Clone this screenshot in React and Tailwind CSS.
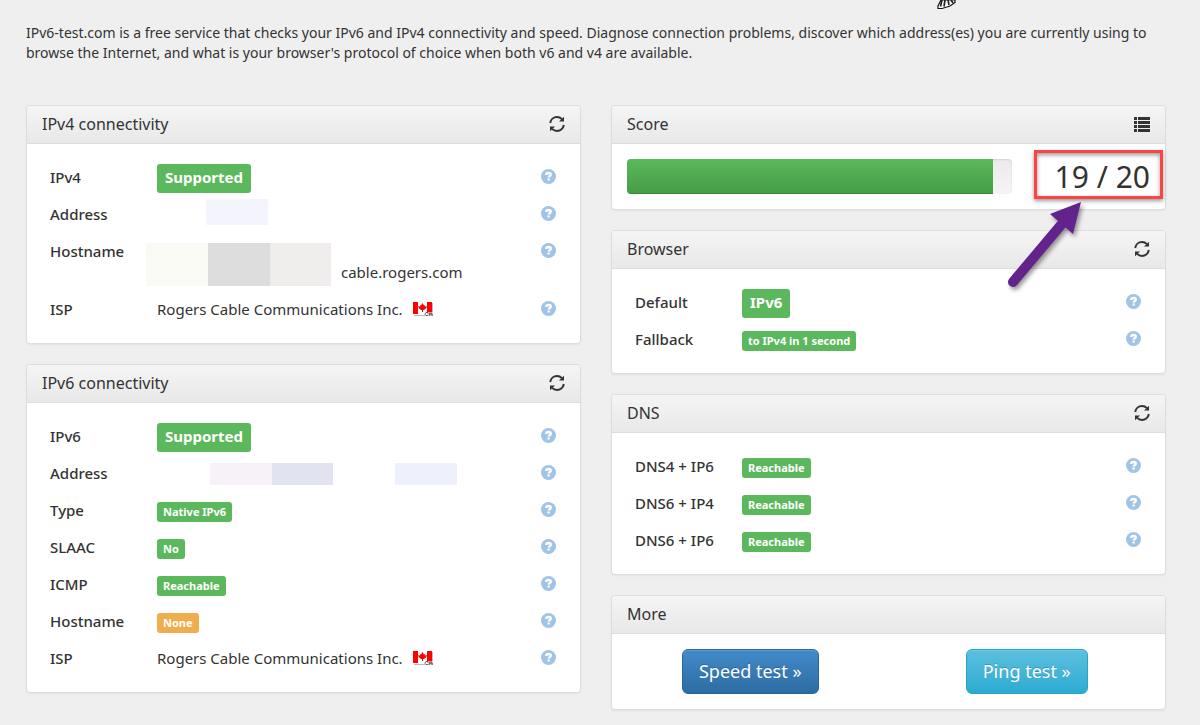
import React from 'react';

const ipv4Rows = [
  { label: 'IPv4', badge: 'Supported', large: true },
  { label: 'Address', blocks: 'v4address' },
  { label: 'Hostname', blocks: 'v4host' },
  { label: 'ISP', isp: 'Rogers Cable Communications Inc.' },
];

const ipv6Rows = [
  { label: 'IPv6', badge: 'Supported', large: true },
  { label: 'Address', blocks: 'v6address' },
  { label: 'Type', badge: 'Native IPv6' },
  { label: 'SLAAC', badge: 'No' },
  { label: 'ICMP', badge: 'Reachable' },
  { label: 'Hostname', badge: 'None', warning: true },
  { label: 'ISP', isp: 'Rogers Cable Communications Inc.' },
];

const browserRows = [
  { label: 'Default', badge: 'IPv6', large: true },
  { label: 'Fallback', badge: 'to IPv4 in 1 second' },
];

const dnsRows = [
  { label: 'DNS4 + IP6', badge: 'Reachable' },
  { label: 'DNS6 + IP4', badge: 'Reachable' },
  { label: 'DNS6 + IP6', badge: 'Reachable' },
];

const RefreshIcon = () => (
  <svg className="w-4 h-4" viewBox="0 0 16 16" fill="none">
    <path d="M1.200 7C1.700 3.600 4.600 1.100 8 1.100c2 0 3.600.700 4.900 2" stroke="#333" strokeWidth="2" />
    <path d="M14.800 9C14.300 12.400 11.400 14.900 8 14.900c-2 0-3.600-.700-4.900-2" stroke="#333" strokeWidth="2" />
    <path d="M15 .8V5.500H10zM1 15.200V10.500h5z" fill="#333" />
  </svg>
);

const ListIcon = () => (
  <svg className="w-4 h-4" viewBox="0 0 16 16" fill="#333">
    <path d="M0 1h3v3H0zM4 1h12v3H4zM0 5h3v3H0zM4 5h12v3H4zM0 9h3v3H0zM4 9h12v3H4zM0 13h3v3H0zM4 13h12v3H4z" />
  </svg>
);

const HelpIcon = () => (
  <svg className="w-[15px] h-[15px]" viewBox="0 0 15 15" fill="none">
    <circle cx="7.5" cy="7.5" r="7.5" fill="#a0c4e6" />
    <path d="M5.2 5.900C5.200 4.600 6.100 4 7.500 4s2.300.700 2.300 1.700c0 1.500-2.100 1.500-2.100 2.900" stroke="#fff" strokeWidth="2.300" />
    <path d="M6.500 9.500h2.300v2H6.500z" fill="#fff" />
  </svg>
);

const CanadaFlag = () => (
  <svg className="w-[21px] h-[15px]" viewBox="0 0 21 15" role="img" aria-label="Canada">
    <path d="M1 1h19v13H1z" fill="#bbb" />
    <path d="M0 0h19v13H0z" fill="#fff" />
    <path d="M0 0h5v12H0zM14 0h5v12h-5z" fill="#f00" />
    <path d="M9.500 1L11 3.500l1-.500-.200 1.500 2-.500-.500 2-2.300 2H8L5.700 6l-.500-2 2 .500L7 3l1 .5zM9 7h1v3H9z" fill="#f00" />
    <path d="M12 10h8v4h-8z" fill="#fff" opacity=".6" />
    <path d="M15 10.500h-2l-.800.800v1.400l.800.800h2M16.200 14v-2l.900-1h1.200l.9 1v2M16.200 12.700h3" stroke="#444" strokeWidth=".8" fill="none" />
  </svg>
);

const Badge = ({ large, warning, children }) => (
  <span
    className={`inline-block font-bold text-white rounded-[3px] ${
      large ? 'text-[15px] leading-[21px] px-2 pt-[3px] pb-[5px]' : 'text-[11px] leading-[20px] px-[6px]'
    } ${warning ? 'bg-[#f0ad4e]' : 'bg-[#5cb85c]'}`}
  >
    {children}
  </span>
);

/* addresses and host names are blanked out */
const Blocks = ({ kind }) => {
  if (kind === 'v4address') {
    return <div className="w-[62px] h-[26px] -my-[5px] ml-[49px] bg-[#f4f5fc]"></div>;
  }
  if (kind === 'v6address') {
    return (
      <div className="flex h-[22px] ml-[53px] -mb-[1px]">
        <div className="w-[62px] bg-[#f7f2f7]"></div>
        <div className="w-[61px] bg-[#e1e3f1]"></div>
        <div className="w-[62px] ml-[62px] bg-[#eef1fb]"></div>
      </div>
    );
  }
  return (
    <div className="flex items-end h-[42px]">
      <div className="flex h-[43px] -ml-[11px] mr-[10px] -mb-[3px]">
        <div className="w-[62px] bg-[#fafaf5]"></div>
        <div className="w-[62px] bg-[#dddddd]"></div>
        <div className="w-[61px] bg-[#efeeed]"></div>
      </div>
      <span>cable.rogers.com</span>
    </div>
  );
};

const Panel = ({ title, icon, action, children }) => (
  <section className="bg-white border border-[#ddd] rounded shadow-[0_1px_2px_rgba(0,0,0,0.05)]">
    <header className="flex items-center justify-between h-[38px] px-[15px] pb-[2px] border-b border-[#ddd] rounded-t bg-linear-to-b from-[#f5f5f5] to-[#e8e8e8]">
      <h3 className="text-base leading-[18px]">{title}</h3>
      {icon && <button type="button" aria-label={action}>{icon}</button>}
    </header>
    <div className="p-[15px]">{children}</div>
  </section>
);

const ResultTable = ({ rows }) => (
  <table className="w-full table-fixed text-[15px] leading-[21px]">
    <tbody>
      {rows.map((row, index) => (
        <tr key={index} className="h-[37px] align-top">
          <th scope="row" className="w-[107px] p-2 text-left font-medium whitespace-nowrap">{row.label}</th>
          <td className="px-2">
            {row.badge && (
              <div className={`flex ${row.large ? 'pt-[5px]' : 'pt-[10px]'}`}>
                <Badge large={row.large} warning={row.warning}>{row.badge}</Badge>
              </div>
            )}
            {row.blocks && <div className="py-2"><Blocks kind={row.blocks} /></div>}
            {row.isp && (
              <div className="flex items-center gap-[10px] py-2">
                <span>{row.isp}</span>
                <CanadaFlag />
              </div>
            )}
          </td>
          <td className="w-8 px-2 pt-[10px]">
            <button type="button" className="block" aria-label={`Help: ${row.label}`}><HelpIcon /></button>
          </td>
        </tr>
      ))}
    </tbody>
  </table>
);

const Score = ({ value, total }) => (
  <div className="flex items-center">
    <div className="flex-1 h-[35px] rounded overflow-hidden bg-linear-to-b from-[#ebebeb] to-[#f5f5f5] shadow-[inset_0_1px_2px_rgba(0,0,0,0.1)]">
      <div
        className="h-full bg-linear-to-b from-[#5cb85c] to-[#449d44] shadow-[inset_0_-1px_0_rgba(0,0,0,0.15)]"
        style={{ width: `${(value / total) * 100}%` }}
      ></div>
    </div>
    <div className="relative w-[138px] text-right text-[30px] leading-[35px]">
      {value} / {total}
      <div className="absolute -top-[9px] -right-[13px] w-[129px] h-[49px] border-3 border-[#fd4444] shadow-[0_2px_4px_rgba(0,0,0,0.4),inset_0_2px_4px_rgba(0,0,0,0.4)]"></div>
      <svg className="absolute top-[41px] right-[61px] w-[90px] h-[96px] z-10 drop-shadow-[2px_3px_2px_rgba(0,0,0,0.4)]" viewBox="0 0 90 96">
        <path d="M14 82L62 25" stroke="#64228c" strokeWidth="10" strokeLinecap="round" />
        <path d="M82 2L74 34 51 14z" fill="#64228c" />
      </svg>
    </div>
  </div>
);

const App = () => {
  return (
    <div className="min-h-screen bg-[#efefef] text-[#333] pt-[23px] pl-[26px] pr-[34px] pb-[15px] font-['Noto_Sans',sans-serif]">
      <svg className="absolute top-0 left-[937px] w-[22px] h-[10px]" viewBox="0 0 22 10" aria-hidden="true">
        <path d="M4 0L1 6v2.500h4L13 6l5-3.500V0z" fill="#fff" stroke="#111" strokeWidth="1.200" />
        <path d="M5 0L3.500 6.500M8 0L7 6.500M11 0l1 5M14 0l2 3" stroke="#222" strokeWidth="1.700" />
      </svg>
      <p className="text-sm leading-5 mb-[42px]">
        IPv6-test.com is a free service that checks your IPv6 and IPv4 connectivity and speed. Diagnose connection
        problems, discover which address(es) you are currently using to browse the Internet, and what is your
        browser's protocol of choice when both v6 and v4 are available.
      </p>

      <div className="grid grid-cols-2 gap-[30px] items-start">
        <div className="flex flex-col gap-5">
          <Panel title="IPv4 connectivity" icon={<RefreshIcon />} action="Refresh IPv4">
            <ResultTable rows={ipv4Rows} />
          </Panel>
          <Panel title="IPv6 connectivity" icon={<RefreshIcon />} action="Refresh IPv6">
            <ResultTable rows={ipv6Rows} />
          </Panel>
        </div>

        <div className="flex flex-col gap-5">
          <Panel title="Score" icon={<ListIcon />} action="Score details">
            <Score value={19} total={20} />
          </Panel>
          <Panel title="Browser" icon={<RefreshIcon />} action="Refresh browser">
            <ResultTable rows={browserRows} />
          </Panel>
          <Panel title="DNS" icon={<RefreshIcon />} action="Refresh DNS">
            <ResultTable rows={dnsRows} />
          </Panel>
          <Panel title="More">
            <div className="grid grid-cols-2 justify-items-center -mx-[15px] text-lg leading-6 text-white">
              <a
                href="#speed"
                className="px-4 pt-[9px] pb-[10px] rounded-md border border-[#2b669a] bg-linear-to-b from-[#428bca] to-[#2d6ca2] shadow-[inset_0_1px_0_rgba(255,255,255,0.15)] [text-shadow:0_-1px_0_rgba(0,0,0,0.2)]"
              >
                Speed test »
              </a>
              <a
                href="#ping"
                className="px-4 pt-[9px] pb-[10px] rounded-md border border-[#28a4c9] bg-linear-to-b from-[#5bc0de] to-[#2aabd2] shadow-[inset_0_1px_0_rgba(255,255,255,0.15)] [text-shadow:0_-1px_0_rgba(0,0,0,0.2)]"
              >
                Ping test »
              </a>
            </div>
          </Panel>
        </div>
      </div>
    </div>
  );
};

export default App;
